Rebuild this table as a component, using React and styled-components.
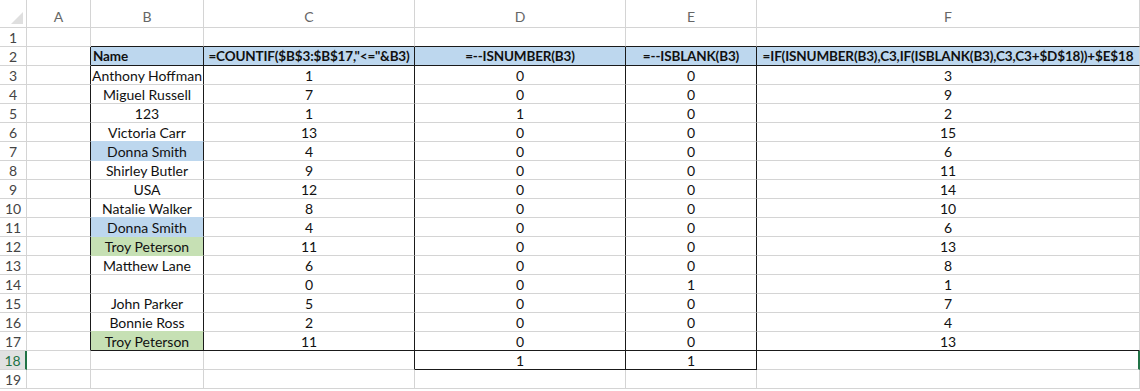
import React from "react";
import styled, { createGlobalStyle } from "styled-components";

const GlobalStyle = createGlobalStyle`
  html, body { margin: 0; padding: 0; background: #ffffff; }
  body { font-family: Lato, "Open Sans", sans-serif; }
`;

const GRID = "#d4d4d4";
const BLACK = "#1a1a1a";
const GREEN = "#217346";

const Sheet = styled.div`
  display: grid;
  grid-template-columns: 27px 64px 113px 211px 211px 131px 383px;
  grid-template-rows: 28px;
  grid-auto-rows: 19px;
  width: 1140px;
  overflow: hidden;
  font-family: Lato, "Open Sans", sans-serif;
  font-size: 14px;
  color: #111;
`;

const Corner = styled.div`
  position: relative;
  box-sizing: border-box;
  border-right: 1px solid ${GRID};
  border-bottom: 1px solid ${GRID};
  &::after {
    content: "";
    position: absolute;
    right: 3px;
    bottom: 3px;
    width: 0;
    height: 0;
    border-left: 12px solid transparent;
    border-bottom: 12px solid #dfdfdf;
  }
`;

const ColHead = styled.div`
  box-sizing: border-box;
  display: flex;
  align-items: flex-end;
  justify-content: center;
  padding-bottom: 2px;
  border-right: 1px solid ${GRID};
  border-bottom: 1px solid ${GRID};
  color: #666;
  font-size: 14px;
`;

const RowHead = styled.div`
  box-sizing: border-box;
  display: flex;
  align-items: center;
  justify-content: center;
  border-bottom: 1px solid ${GRID};
  border-right: ${(p) => (p.$sel ? `2px solid ${GREEN}` : `1px solid ${GRID}`)};
  background: ${(p) => (p.$sel ? "#e1e1e1" : "transparent")};
  color: ${(p) => (p.$sel ? GREEN : "#444")};
  font-size: 14px;
`;

const Cell = styled.div`
  box-sizing: border-box;
  display: flex;
  align-items: center;
  justify-content: ${(p) => (p.$left ? "flex-start" : "center")};
  padding: 0 2px;
  white-space: nowrap;
  overflow: hidden;
  background: ${(p) => p.$fill || "transparent"};
  font-weight: ${(p) => (p.$bold ? 700 : 400)};
  font-size: ${(p) => (p.$bold ? "13.5px" : "14px")};
  letter-spacing: ${(p) => (p.$bold ? "-0.15px" : "0")};
  border-right: ${(p) => p.$r || `1px solid ${GRID}`};
  border-bottom: ${(p) => p.$b || `1px solid ${GRID}`};
`;

const BLUE = "#bdd7ee";
const LGREEN = "#c6e0b4";

const data = [
  ["Anthony Hoffman", "1", "0", "0", "3"],
  ["Miguel Russell", "7", "0", "0", "9"],
  ["123", "1", "1", "0", "2"],
  ["Victoria Carr", "13", "0", "0", "15"],
  ["Donna Smith", "4", "0", "0", "6", BLUE],
  ["Shirley Butler", "9", "0", "0", "11"],
  ["USA", "12", "0", "0", "14"],
  ["Natalie Walker", "8", "0", "0", "10"],
  ["Donna Smith", "4", "0", "0", "6", BLUE],
  ["Troy Peterson", "11", "0", "0", "13", LGREEN],
  ["Matthew Lane", "6", "0", "0", "8"],
  ["", "0", "0", "1", "1"],
  ["John Parker", "5", "0", "0", "7"],
  ["Bonnie Ross", "2", "0", "0", "4"],
  ["Troy Peterson", "11", "0", "0", "13", LGREEN],
];

const headers = [
  "Name",
  '=COUNTIF($B$3:$B$17,"<="&B3)',
  "=--ISNUMBER(B3)",
  "=--ISBLANK(B3)",
  "=IF(ISNUMBER(B3),C3,IF(ISBLANK(B3),C3,C3+$D$18))+$E$18",
];

const blk = `1px solid ${BLACK}`;

export default function App() {
  const rows = [];
  rows.push(
    <React.Fragment key="r1">
      <RowHead>1</RowHead>
      <Cell />
      {[0, 1, 2, 3, 4].map((i) => (
        <Cell key={i} $b={blk} />
      ))}
    </React.Fragment>
  );
  rows.push(
    <React.Fragment key="r2">
      <RowHead>2</RowHead>
      <Cell $r={blk} />
      {headers.map((h, i) => (
        <Cell
          key={i}
          $fill={BLUE}
          $bold
          $left={i === 0}
          $b={blk}
          $r={i < 4 ? blk : undefined}
        >
          {h}
        </Cell>
      ))}
    </React.Fragment>
  );
  data.forEach((row, idx) => {
    const n = idx + 3;
    const last = n === 17;
    const next = data[idx + 1];
    const fill = row[5];
    const bBottom = last
      ? blk
      : fill || (next && next[5])
      ? `1px solid ${fill || next[5]}`
      : undefined;
    rows.push(
      <React.Fragment key={n}>
        <RowHead>{n}</RowHead>
        <Cell $r={blk} />
        <Cell $fill={fill} $r={blk} $b={bBottom}>
          {row[0]}
        </Cell>
        {[1, 2, 3, 4].map((c) => (
          <Cell key={c} $r={c < 4 ? blk : undefined} $b={last ? blk : undefined}>
            {row[c]}
          </Cell>
        ))}
      </React.Fragment>
    );
  });
  rows.push(
    <React.Fragment key="r18">
      <RowHead $sel>18</RowHead>
      <Cell />
      <Cell />
      <Cell $r={blk} />
      <Cell $r={blk} $b={blk}>1</Cell>
      <Cell $r={blk} $b={blk}>1</Cell>
      <Cell $r={`2px solid ${GREEN}`} />
    </React.Fragment>
  );
  rows.push(
    <React.Fragment key="r19">
      <RowHead>19</RowHead>
      {[0, 1, 2, 3, 4, 5].map((i) => (
        <Cell key={i} />
      ))}
    </React.Fragment>
  );

  return (
    <>
      <GlobalStyle />
      <Sheet>
        <Corner />
        {["A", "B", "C", "D", "E", "F"].map((l) => (
          <ColHead key={l}>{l}</ColHead>
        ))}
        {rows}
      </Sheet>
    </>
  );
}
